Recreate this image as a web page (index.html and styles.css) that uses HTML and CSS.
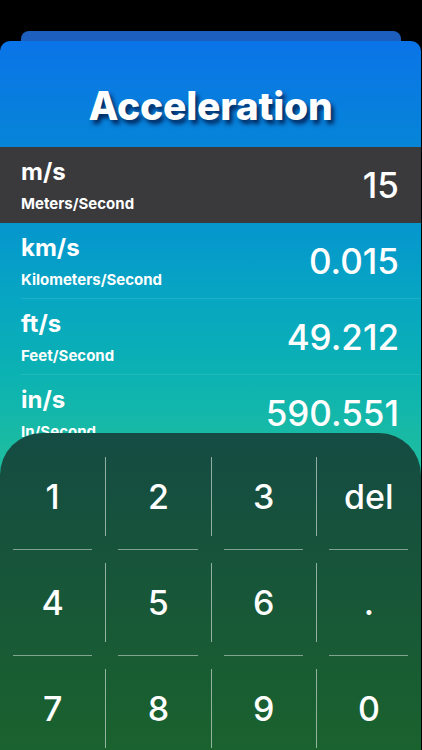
FILE: index.html
```html
<!DOCTYPE html>
<html lang="en">
<head>
    <meta charset="UTF-8">
    <meta name="viewport" content="width=device-width, initial-scale=1.0">
    <title>Acceleration</title>
    <link rel="stylesheet" href="styles.css">
</head>
<body>
    <div class="screen">
        <div class="back-card"></div>
        <div class="card">
            <h1 class="title">Acceleration</h1>

            <div class="units">
                <div class="row active">
                    <div class="names">
                        <div class="unit">m/s</div>
                        <div class="desc">Meters/Second</div>
                    </div>
                    <div class="value">15</div>
                </div>
                <div class="row sep">
                    <div class="names">
                        <div class="unit">km/s</div>
                        <div class="desc">Kilometers/Second</div>
                    </div>
                    <div class="value">0.015</div>
                </div>
                <div class="row sep">
                    <div class="names">
                        <div class="unit">ft/s</div>
                        <div class="desc">Feet/Second</div>
                    </div>
                    <div class="value">49.212</div>
                </div>
                <div class="row">
                    <div class="names">
                        <div class="unit">in/s</div>
                        <div class="desc">In/Second</div>
                    </div>
                    <div class="value">590.551</div>
                </div>
            </div>

            <div class="keypad">
                <div class="key-row">
                    <div class="key"><span class="face">1</span></div>
                    <div class="key"><span class="face">2</span></div>
                    <div class="key"><span class="face">3</span></div>
                    <div class="key"><span class="face">del</span></div>
                </div>
                <div class="divider">
                    <span></span><span></span><span></span><span></span>
                </div>
                <div class="key-row">
                    <div class="key"><span class="face">4</span></div>
                    <div class="key"><span class="face">5</span></div>
                    <div class="key"><span class="face">6</span></div>
                    <div class="key"><span class="face">.</span></div>
                </div>
                <div class="divider">
                    <span></span><span></span><span></span><span></span>
                </div>
                <div class="key-row">
                    <div class="key"><span class="face">7</span></div>
                    <div class="key"><span class="face">8</span></div>
                    <div class="key"><span class="face">9</span></div>
                    <div class="key"><span class="face">0</span></div>
                </div>
            </div>
        </div>
    </div>
</body>
</html>
```

FILE: styles.css
```css
* {
    margin: 0;
    padding: 0;
    box-sizing: border-box;
}

body {
    background: #000;
    font-family: Inter, "Liberation Sans", sans-serif;
    color: #fff;
    height: 750px;
    overflow: hidden;
}

.screen {
    padding-top: 31px;
    height: 750px;
    display: flex;
    flex-direction: column;
}

.back-card {
    height: 10px;
    margin: 0 21px;
    background: #1c5fbf;
    border-radius: 8px 8px 0 0;
}

.card {
    flex: 1;
    margin-right: 1px;
    border-radius: 10px 10px 0 0;
    overflow: hidden;
    background: linear-gradient(180deg,
        #0a74e8 0px,
        #0685d7 106px,
        #0596ce 182px,
        #07a6c2 258px,
        #0bb2b2 334px,
        #1cbca2 410px,
        #2ac89a 709px);
}

.title {
    padding: 41px 0 17px;
    line-height: 48px;
    font-size: 39px;
    font-weight: 800;
    text-align: center;
    letter-spacing: -0.2px;
    text-shadow: 3px 4px 4px rgba(0, 10, 50, 0.75);
}

.row {
    height: 76px;
    margin-left: 21px;
    padding-right: 22px;
    display: flex;
    justify-content: space-between;
    align-items: center;
}

.row.active {
    margin-left: 0;
    padding-left: 21px;
    background: #3a3a3c;
}

.row.sep {
    border-bottom: 1px solid rgba(255, 255, 255, 0.1);
}

.names {
    align-self: flex-start;
    padding-top: 11px;
}

.unit {
    font-size: 24px;
    font-weight: 700;
    line-height: 28px;
}

.desc {
    margin-top: 9px;
    font-size: 15px;
    font-weight: 700;
    line-height: 18px;
}

.value {
    font-size: 35px;
    font-weight: 500;
}

.keypad {
    position: relative;
    margin-top: -18px;
    height: 330px;
    padding-top: 11px;
    border-radius: 42px 42px 0 0;
    background: linear-gradient(180deg, #154b43 0%, #1a632d 100%);
}

.key-row {
    display: grid;
    grid-template-columns: repeat(4, 1fr);
}

.key {
    padding: 13px 0;
}

.face {
    height: 79px;
    display: flex;
    align-items: center;
    justify-content: center;
    font-size: 34px;
    font-weight: 500;
}

.key + .key .face {
    border-left: 1px solid rgba(200, 215, 205, 0.7);
}

.divider {
    display: grid;
    grid-template-columns: repeat(4, 1fr);
}

.divider span {
    margin: 0 13px;
    border-top: 1px solid rgba(200, 215, 205, 0.6);
}
```
